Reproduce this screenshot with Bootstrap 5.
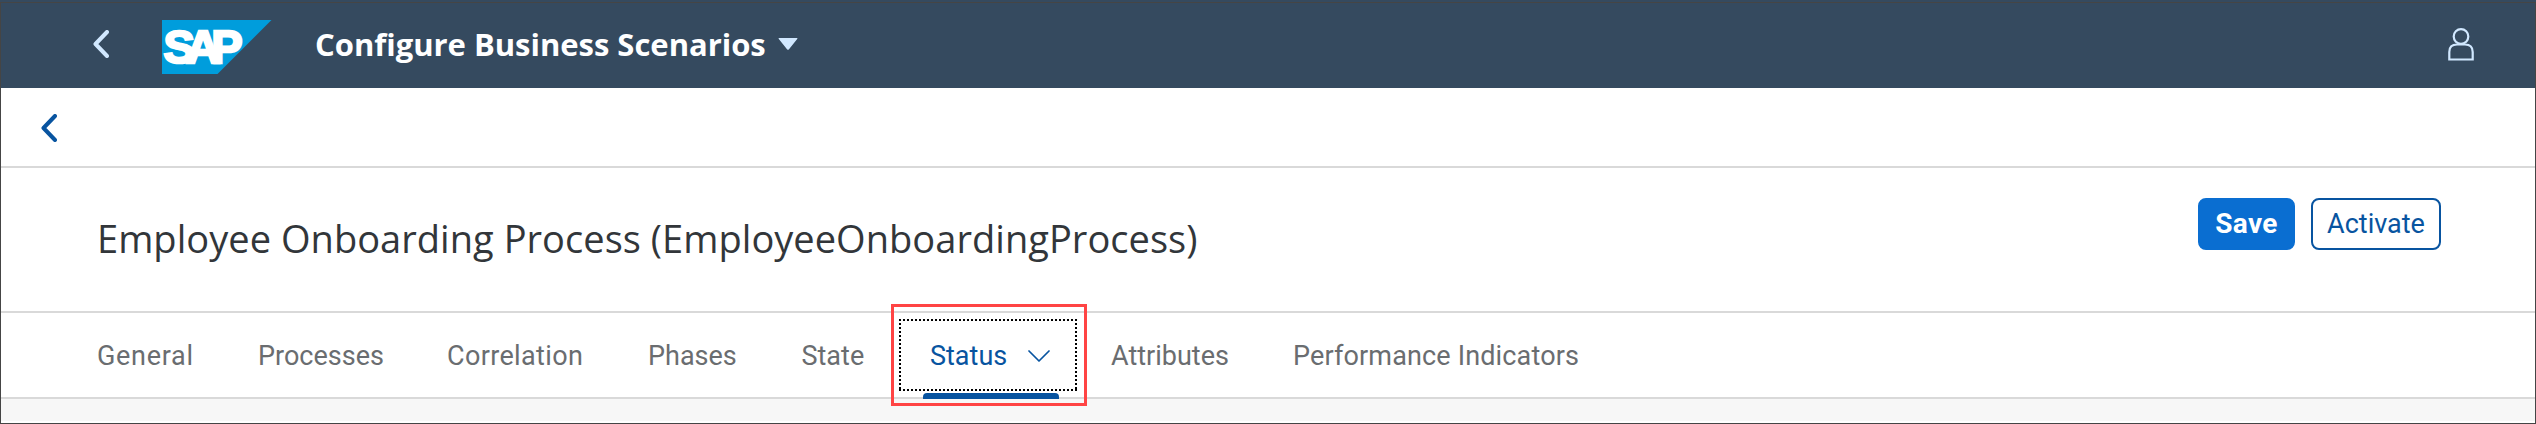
<!DOCTYPE html>
<html lang="en">
<head>
<meta charset="utf-8">
<meta name="viewport" content="width=device-width, initial-scale=1">
<title>Configure Business Scenarios</title>
<link href="https://cdn.jsdelivr.net/npm/bootstrap@5.3.0/dist/css/bootstrap.min.css" rel="stylesheet">
<style>
  :root { --shell: #354a5f; --link: #0854a0; --brand: #0a6ed1; --line: #d9d9d9; }
  body { font-family: Roboto, "Liberation Sans", sans-serif; font-size: 27px; color: #32363a; overflow: hidden; }
  svg { display: block; flex: none; }
  .app { height: 424px; }
  .app-frame { top: 2px; pointer-events: none; border: 1px solid #454545; z-index: 5; }
  .shell-bar { height: 88px; background: var(--shell); padding: 0 62px 0 93px; }
  .shell-logo { margin: 6px 0 0 53px; }
  .shell-title { font: 700 31px/40px "Open Sans", sans-serif; letter-spacing: -.02px; color: #fff; margin: -1px 0 0 43px; }
  .shell-caret { margin-left: 12px; }
  .logo-word { font: 700 47px "Liberation Sans", sans-serif; }
  .sub-bar { height: 80px; border-bottom: 2px solid var(--line); padding: 2px 41px 0; }
  .page-head { height: 145px; border-bottom: 2px solid var(--line); padding: 30px 95px 0 97px; }
  .page-title { font: 400 38px/50px "Open Sans", sans-serif; letter-spacing: .04px; margin: 15px 0 0; }
  .action { height: 52px; padding: 0; line-height: 48px; font-size: 27px; border-width: 2px; border-radius: 8px; }
  .btn-save { width: 97px; font-weight: 700; font-size: 28px; letter-spacing: .4px; --bs-btn-color: #fff; --bs-btn-bg: var(--brand); --bs-btn-border-color: var(--brand); }
  .btn-activate { width: 130px; --bs-btn-color: var(--link); --bs-btn-border-color: var(--link); --bs-btn-bg: #fff; }
  .tab-strip { height: 86px; border-bottom: 2px solid var(--line); padding-left: 97px; }
  .tab-strip .nav-link { padding: 1px 0 0; line-height: 84px; color: #6a6d70; height: 84px; white-space: nowrap; }
  .w-general { width: 161px; letter-spacing: .7px; }
  .w-processes { width: 189px; }
  .w-correlation { width: 201px; letter-spacing: .35px; }
  .w-phases { width: 153.5px; }
  .w-state { width: 128.5px; }
  .w-status { width: 181px; }
  .w-attributes { width: 182px; }
  .w-performance { letter-spacing: .15px; }
  .tab-strip .nav-link.active { color: var(--link); }
  .tab-chevron { margin-left: 21px; }
  .focus-box { left: -31px; top: 6px; width: 178px; height: 72px; }
  .marker { left: -39px; top: -9px; width: 196px; height: 102px; border: 3px solid #ff4444; }
  .underline { left: -7px; top: 80px; width: 136px; height: 6px; background: var(--link); border-radius: 4px 4px 0 0; }
  .page-body { height: 22px; background: #f7f7f7; }
</style>
</head>
<body class="bg-white">
<div class="app position-relative">
  <header class="shell-bar d-flex align-items-center">
    <svg width="16" height="28" viewBox="0 0 16 28" fill="none" stroke="#d1e8ff" stroke-width="4" stroke-linecap="round" stroke-linejoin="round"><path d="M14 2 2.5 14 14 26"/></svg>
    <svg class="shell-logo" width="110" height="54" viewBox="0 0 110 54">
      <path d="M0 0H109.5L55.5 54H0Z" fill="#009ddc"/>
      <text class="logo-word" x="1.500" y="43" textLength="79" lengthAdjust="spacing" fill="#fff" stroke="#fff" stroke-width="2.500">SAP</text>
    </svg>
    <span class="shell-title">Configure Business Scenarios</span>
    <svg class="shell-caret" width="20" height="12" viewBox="0 0 20 12"><path d="M1.2 0H18.8Q20 0 19.200 1L11 11.200Q10 12.500 9 11.200L.8 1Q0 0 1.200 0Z" fill="#d1e8ff"/></svg>
    <svg class="ms-auto" width="26" height="33" viewBox="0 0 26 33" fill="none" stroke="#d1e8ff" stroke-width="2.2"><circle cx="13" cy="8.5" r="7.3"/><path d="M1.300 31.500V24Q1.300 16.500 9 16.500H17Q24.700 16.500 24.700 24V31.500Z"/></svg>
  </header>

  <div class="sub-bar d-flex align-items-center">
    <svg width="16" height="28" viewBox="0 0 16 28" fill="none" stroke="#0854a0" stroke-width="4" stroke-linecap="round" stroke-linejoin="round"><path d="M14 2 2.5 14 14 26"/></svg>
  </div>

  <section class="page-head d-flex align-items-start justify-content-between">
    <h1 class="page-title">Employee Onboarding Process (EmployeeOnboardingProcess)</h1>
    <div class="d-flex gap-3">
      <button type="button" class="btn action btn-save">Save</button>
      <button type="button" class="btn action btn-activate">Activate</button>
    </div>
  </section>

  <nav class="tab-strip nav flex-nowrap">
    <a class="nav-link w-general" href="#">General</a>
    <a class="nav-link w-processes" href="#">Processes</a>
    <a class="nav-link w-correlation" href="#">Correlation</a>
    <a class="nav-link w-phases" href="#">Phases</a>
    <a class="nav-link w-state" href="#">State</a>
    <a class="nav-link w-status active position-relative d-flex align-items-center" href="#">Status
      <svg class="tab-chevron" width="22" height="12" viewBox="0 0 22 12" fill="none" stroke="#0854a0" stroke-width="1.7" stroke-linecap="round" stroke-linejoin="round"><path d="M1 1 11 11 21 1"/></svg>
      <svg class="focus-box position-absolute" viewBox="0 0 178 72" fill="none" stroke="#000" stroke-width="2" stroke-dasharray="2"><path d="M0 1H178M0 71H178M1 0V72M177 0V72"/></svg>
      <span class="underline position-absolute"></span>
      <span class="marker position-absolute"></span>
    </a>
    <a class="nav-link w-attributes" href="#">Attributes</a>
    <a class="nav-link w-performance" href="#">Performance Indicators</a>
  </nav>

  <div class="page-body"></div>
  <div class="app-frame position-absolute start-0 end-0 bottom-0"></div>
</div>
<script src="https://cdn.jsdelivr.net/npm/bootstrap@5.3.0/dist/js/bootstrap.bundle.min.js"></script>
</body>
</html>
